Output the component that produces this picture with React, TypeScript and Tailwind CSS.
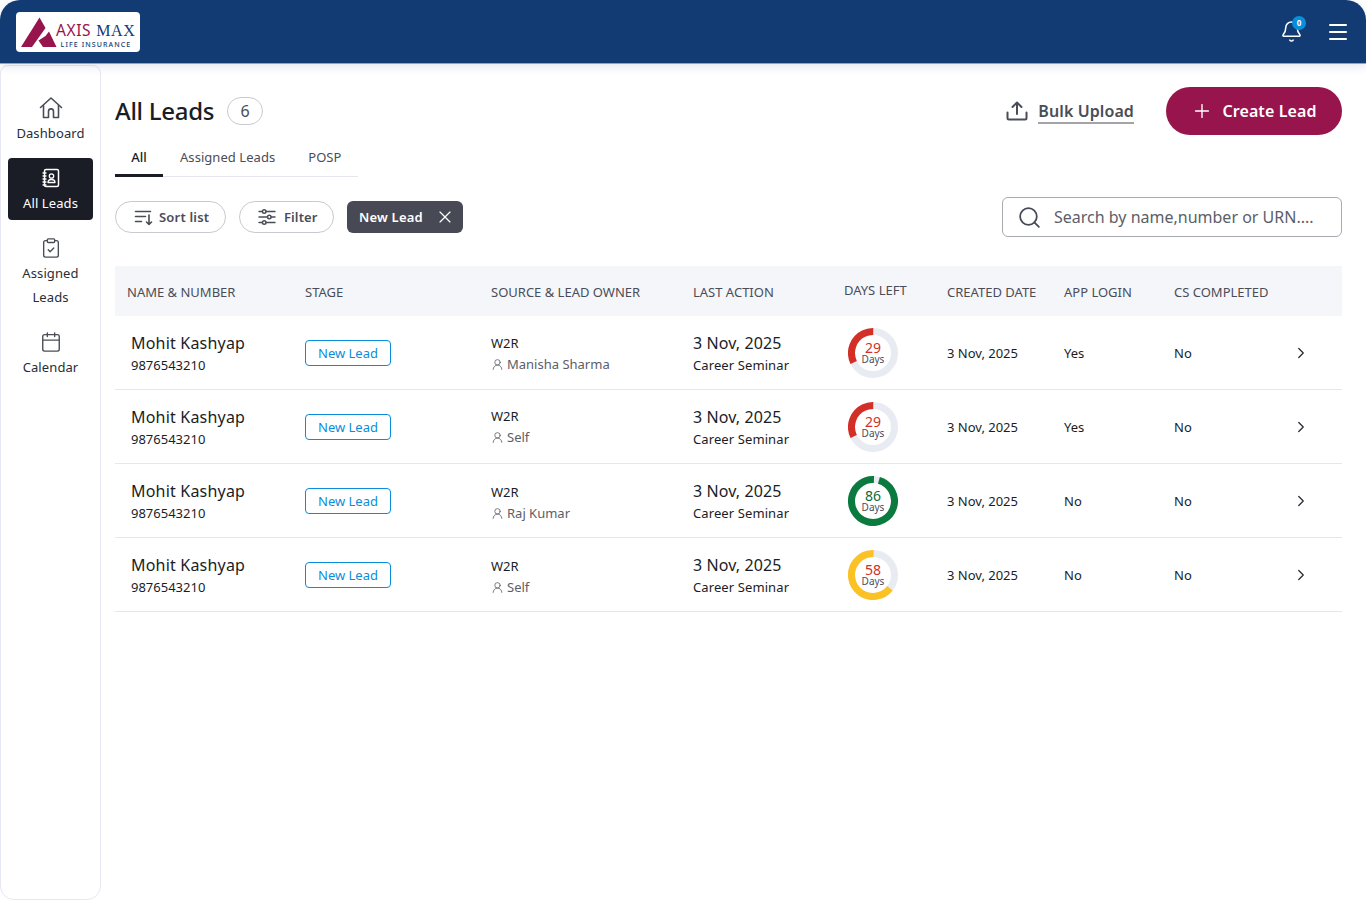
import { Bell, Calendar, ChevronRight, ClipboardCheck, Menu, Plus, Search, UserRound, X } from "lucide-react";

const leads = [
  { owner: "Manisha Sharma", days: 29, tone: "#d32f27", num: "#d32f27", login: "Yes", srcClass: "mt-[2px]" },
  { owner: "Self", days: 29, tone: "#d32f27", num: "#d32f27", login: "Yes", srcClass: "" },
  { owner: "Raj Kumar", days: 86, tone: "#0b7a3e", num: "#0b6b38", login: "No", srcClass: "mt-[4px]" },
  { owner: "Self", days: 58, tone: "#fcc122", num: "#d32f27", login: "No", srcClass: "mt-[4px]" },
];

const rowGrid = "grid grid-cols-[190px_186px_202px_151px_103px_117px_110px_110px_1fr] items-center";

const Logo = () => (
  <div className="w-[124px] h-10 bg-white rounded flex items-center pl-[5px]">
    <svg width="36" height="32" viewBox="0 0 36 32" className="shrink-0 mt-[2px]">
      <path d="M0 30 L18.5 0.5 L24.5 11 L11 30 Z" fill="#97144d" />
      <path d="M24.5 19 L28 14.5 L35.5 30 L22 30 L17.5 23.5 Z" fill="#97144d" />
    </svg>
    <div className="flex flex-col items-end -ml-[1px] mt-[9px]">
      <div className="flex items-baseline leading-[16px] gap-[5px]">
        <span className="text-[#97144d] text-[15.500px] tracking-[0.6px]">AXIS</span>
        <span className="text-[#133b73] font-['Liberation_Serif',serif] text-[16px] tracking-[0.6px]">MAX</span>
      </div>
      <span className="text-[#133b73] text-[7px] leading-[10px] tracking-[1.1px] font-medium mr-[4px] mt-[1px]">LIFE INSURANCE</span>
    </div>
  </div>
);

const HouseIcon = () => (
  <svg width="24" height="24" viewBox="0 0 24 24" fill="none" stroke="#4a4d57" strokeWidth="1.6" strokeLinecap="round" strokeLinejoin="round">
    <path d="M1.500 11.500 L12 2 L22.500 11.500" />
    <path d="M4.500 9.500 V21.500 H9.500 V15.500 C9.500 12 14.500 12 14.500 15.500 V21.500 H19.500 V9.500" />
  </svg>
);

const UploadIcon = () => (
  <svg width="22" height="22" viewBox="0 0 22 22" fill="none" stroke="#4a4d57" strokeWidth="2" strokeLinecap="round" strokeLinejoin="round">
    <path d="M1.500 12.500 V18 C1.500 19 2 19.500 3 19.500 H19 C20 19.500 20.500 19 20.500 18 V12.500" />
    <path d="M11 14 V2.500 M6.500 7 L11 2.500 L15.500 7" />
  </svg>
);

const AddressBook = () => (
  <svg width="20" height="20" viewBox="0 0 20 20" fill="none" stroke="#fff" strokeWidth="1.5" strokeLinecap="round" strokeLinejoin="round">
    <rect x="3.5" y="1.5" width="14" height="17" rx="1.5" />
    <path d="M2 5h3M2 8h3M2 11h3M2 14h3M2 17h3" strokeWidth="1.3" />
    <circle cx="10.5" cy="8" r="2.2" strokeWidth="1.3" />
    <path d="M7 14.5c0-2 1.5-3 3.5-3s3.500 1 3.500 3z" strokeWidth="1.3" />
  </svg>
);

const SortIcon = () => (
  <svg width="20" height="20" viewBox="0 0 20 20" fill="none" stroke="#4a4d57" strokeWidth="1.6" strokeLinecap="round" strokeLinejoin="round">
    <path d="M1.500 4.500h15M1.500 9.500h10M1.500 14.500h6" />
    <path d="M15 8v9.500M12.500 15l2.500 2.500 2.500-2.500" />
  </svg>
);

const FilterIcon = () => (
  <svg width="20" height="20" viewBox="0 0 20 20" fill="none" stroke="#4a4d57" strokeWidth="1.4" strokeLinecap="round">
    <path d="M2 4.500h3.500M9 4.500h9M2 10h8.500M14 10h4M2 15.500h3.500M9 15.500h9" />
    <circle cx="7.200" cy="4.500" r="1.800" />
    <circle cx="12.300" cy="10" r="1.800" />
    <circle cx="7.200" cy="15.500" r="1.800" />
  </svg>
);

const NavItem = ({ icon, label, active, className, labelClass }: { icon: React.ReactNode; label: React.ReactNode; active?: boolean; className?: string; labelClass: string }) => (
  <div className={`w-[85px] flex flex-col items-center rounded ${active ? "bg-[#1a1d26] text-white pt-[10px] pb-[5px]" : "text-[#2a2d36]"} ${className ?? ""}`}>
    {icon}
    <div className={`text-[13px] leading-6 text-center tracking-[0.1px] ${labelClass}`}>{label}</div>
  </div>
);

const Ring = ({ days, tone, num }: { days: number; tone: string; num: string }) => {
  const r = 21.5;
  const len = 2 * Math.PI * r;
  const frac = days / 90;
  return (
    <div className="relative w-[50px] h-[50px] ml-1">
      <svg width="50" height="50" viewBox="0 0 50 50">
        <circle cx="25" cy="25" r={r} fill="none" stroke="#e9ebf2" strokeWidth="7" />
        <circle
          cx="25"
          cy="25"
          r={r}
          fill="none"
          stroke={tone}
          strokeWidth="7"
          strokeDasharray={`${frac * len} ${len}`}
          transform={`rotate(${-90 - frac * 360} 25 25)`}
        />
      </svg>
      <div className="absolute inset-0 flex flex-col items-center justify-center">
        <span className="text-[14px] leading-[13px] pt-[1px]" style={{ color: num }}>{days}</span>
        <span className="text-[10px] leading-[11px] text-[#4a4d57]">Days</span>
      </div>
    </div>
  );
};

export default function App() {
  return (
    <div className="w-[1366px] h-[900px] overflow-hidden bg-white font-['Noto_Sans',sans-serif] text-[#1a1d26] flex flex-col">
      <header className="h-16 shrink-0 bg-[#133b73] rounded-t-[20px] pl-4 pr-4 flex items-center justify-between shadow-[0_3px_10px_rgba(40,60,120,0.12)] z-10 border-b border-[#8fa3c2]">
        <Logo />
        <div className="flex items-center gap-[23px]">
          <div className="relative">
            <Bell size={23} strokeWidth={1.6} className="text-white" />
            <span className="absolute -top-[4px] left-[12px] w-[14px] h-[14px] rounded-full bg-[#0a8ddb] text-white text-[8px] font-bold flex items-center justify-center">0</span>
          </div>
          <Menu size={24} strokeWidth={2} className="text-white" />
        </div>
      </header>
      <div className="flex flex-1 min-h-0">
        <aside className="w-[101px] shrink-0 mt-[1px] border border-[#e5e8f2] rounded-t-lg rounded-b-[14px] flex flex-col items-center pt-[30px]">
          <NavItem labelClass="mt-[1px]" icon={<HouseIcon />} label="Dashboard" />
          <NavItem className="mt-[13px]" labelClass="mt-[3px]" active icon={<AddressBook />} label="All Leads" />
          <NavItem className="mt-[17px]" labelClass="mt-[2px]" icon={<ClipboardCheck size={22} strokeWidth={1.5} className="text-[#4a4d57]" />} label={<>Assigned<br />Leads</>} />
          <NavItem className="mt-[22px]" labelClass="mt-[2px]" icon={<Calendar size={22} strokeWidth={1.5} className="text-[#4a4d57]" />} label="Calendar" />
        </aside>
        <main className="flex-1 pl-[14px] pr-6 min-w-0">
          <div className="flex items-start justify-between pt-[23px]">
            <div>
              <div className="flex items-center gap-[13px] h-[48px]">
                <h1 className="text-[24px] leading-8 font-medium tracking-[-0.3px]">All Leads</h1>
                <span className="w-9 h-7 rounded-full border border-[#c9cacf] text-[16px] text-[#4a4d57] flex items-center justify-center mb-[1px]">6</span>
              </div>
              <div className="flex w-[243px] h-[42px] border-b border-[#e5e6ee] text-[13px] tracking-[0.05px] text-[#4a4d57]">
                <div className="w-12 h-[42px] border-b-[3px] border-[#1a1d26] text-[#1a1d26] text-center leading-[44px] font-medium">All</div>
                <div className="ml-[17px] leading-[44px]">Assigned Leads</div>
                <div className="ml-[33px] leading-[44px]">POSP</div>
              </div>
            </div>
            <div className="flex items-center">
              <UploadIcon />
              <span className="ml-[10px] text-[16px] leading-[22px] font-semibold tracking-[0.1px] text-[#4a4d57] border-b-2 border-[#a3a4aa] mt-[2px]">Bulk Upload</span>
              <button className="ml-8 w-[176px] h-12 rounded-full bg-[#97144d] text-white flex items-center justify-center gap-[9px] text-[16px] font-semibold tracking-[0.1px]">
                <Plus size={22} strokeWidth={1.5} />
                Create Lead
              </button>
            </div>
          </div>

          <div className="flex items-center justify-between mt-5 h-10">
            <div className="flex items-center">
              <button className="h-8 w-[111px] rounded-full border border-[#c9cacf] flex items-center pl-[18px] gap-[5px] text-[13px] font-semibold tracking-[0.2px] text-[#4a4d57]">
                <SortIcon />
                <span className="mt-[1px]">Sort list</span>
              </button>
              <button className="ml-[13px] h-8 w-[95px] rounded-full border border-[#c9cacf] flex items-center pl-[17px] gap-[7px] text-[13px] font-semibold tracking-[0.1px] text-[#4a4d57]">
                <FilterIcon />
                <span className="mt-[1px]">Filter</span>
              </button>
              <div className="ml-[13px] h-8 w-[116px] rounded-md bg-[#474a54] text-white flex items-center pl-3 gap-[12px] text-[13px] font-semibold tracking-[0.2px]">
                <span className="mt-[1px]">New Lead</span>
                <X size={20} strokeWidth={1.4} />
              </div>
            </div>
            <div className="w-[340px] h-10 rounded-md border border-[#a9aab0] flex items-center pl-[14px] gap-[12px] text-[16px] text-[#5b5e68]">
              <Search size={25} strokeWidth={1.7} className="text-[#474a54]" />
              Search by name,number or URN....
            </div>
          </div>

          <div className="mt-[29px]">
            <div className={`${rowGrid} h-[50px] bg-[#f5f6fa] text-[13px] text-[#4a4d57]`}>
              <div className="pl-3 mt-[4px]">NAME &amp; NUMBER</div>
              <div className="mt-[4px]">STAGE</div>
              <div className="mt-[4px]">SOURCE &amp; LEAD OWNER</div>
              <div className="mt-[4px]">LAST ACTION</div>
              <div className="-mt-[1px]">DAYS LEFT</div>
              <div className="mt-[4px]">CREATED DATE</div>
              <div className="mt-[4px]">APP LOGIN</div>
              <div className="mt-[4px]">CS COMPLETED</div>
            </div>
            {leads.map((lead, i) => (
              <div key={i} className={`${rowGrid} h-[74px] border-b border-[#e5e6ee]`}>
                <div className="pl-4">
                  <div className="text-[16px] leading-[24px] tracking-[0.2px]">Mohit Kashyap</div>
                  <div className="text-[13px] leading-[20px]">9876543210</div>
                </div>
                <div>
                  <span className="inline-flex items-center justify-center w-[86px] h-[26px] pt-[2px] rounded border border-[#0a8ddb] text-[#0a8ddb] text-[13px]">New Lead</span>
                </div>
                <div className={lead.srcClass}>
                  <div className="text-[13px] leading-[20px]">W2R</div>
                  <div className="flex items-center gap-[3px] text-[13px] leading-[20px] text-[#5b5e68] mt-[1px]">
                    <UserRound size={13} strokeWidth={1.5} />
                    {lead.owner}
                  </div>
                </div>
                <div>
                  <div className="text-[16px] leading-[24px] tracking-[0.1px]">3 Nov, 2025</div>
                  <div className="text-[13px] leading-[20px] tracking-[0.1px]">Career Seminar</div>
                </div>
                <Ring days={lead.days} tone={lead.tone} num={lead.num} />
                <div className="text-[13px] mt-[2px]">3 Nov, 2025</div>
                <div className="text-[13px] mt-[2px]">{lead.login}</div>
                <div className="text-[13px] mt-[2px]">No</div>
                <div className="pl-[8px]">
                  <ChevronRight size={18} strokeWidth={1.7} className="text-[#2a2d36]" />
                </div>
              </div>
            ))}
          </div>
        </main>
      </div>
    </div>
  );
}
